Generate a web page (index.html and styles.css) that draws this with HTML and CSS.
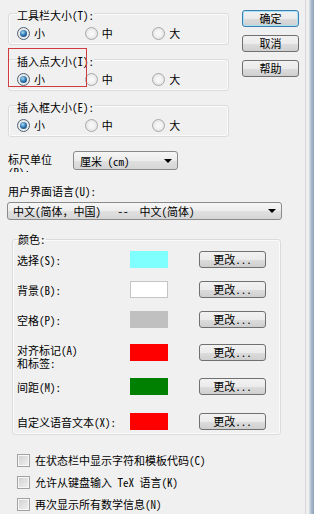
FILE: index.html
```html
<html lang="zh-CN">
<head>
    <meta charset="UTF-8">
    <meta name="viewport" content="width=device-width, initial-scale=1.0">
    <link rel="stylesheet" href="styles.css">
    <title>选项</title>
</head>
<body>
  <div class="dialog">
    <div class="content">
      <div class="top">
        <div class="groups">
          <fieldset class="group">
            <legend>工具栏大小(T):</legend>
            <div class="opts">
              <label class="opt"><span class="radio on"></span>小</label>
              <label class="opt"><span class="radio"></span>中</label>
              <label class="opt"><span class="radio"></span>大</label>
            </div>
          </fieldset>
          <div class="mark-wrap">
            <fieldset class="group">
              <legend>插入点大小(I):</legend>
              <div class="opts">
                <label class="opt"><span class="radio on"></span>小</label>
                <label class="opt"><span class="radio"></span>中</label>
                <label class="opt"><span class="radio"></span>大</label>
              </div>
            </fieldset>
            <span class="mark"></span>
          </div>
          <fieldset class="group">
            <legend>插入框大小(E):</legend>
            <div class="opts">
              <label class="opt"><span class="radio on"></span>小</label>
              <label class="opt"><span class="radio"></span>中</label>
              <label class="opt"><span class="radio"></span>大</label>
            </div>
          </fieldset>
        </div>
        <div class="side">
          <button class="btn default">确定</button>
          <button class="btn">取消</button>
          <button class="btn">帮助</button>
        </div>
      </div>

      <div class="ruler">
        <div class="ruler-label">标尺单位 (R):</div>
        <div class="combo small"><span>厘米 (cm)</span><span class="arrow"></span></div>
      </div>

      <div class="lang-label">用户界面语言(U):</div>
      <div class="combo wide"><span class="pre">中文(简体，中国)   --  中文(简体)</span><span class="arrow"></span></div>

      <fieldset class="colors">
        <legend>颜色:</legend>
        <div class="crow">
          <div class="clabel">选择(S):</div>
          <div class="swatch" style="background:#80ffff"></div>
          <button class="btn change">更改...</button>
        </div>
        <div class="crow">
          <div class="clabel">背景(B):</div>
          <div class="swatch white" style="background:#ffffff"></div>
          <button class="btn change">更改...</button>
        </div>
        <div class="crow">
          <div class="clabel">空格(P):</div>
          <div class="swatch" style="background:#c0c0c0"></div>
          <button class="btn change">更改...</button>
        </div>
        <div class="crow two">
          <div class="clabel">对齐标记(A)<br>和标签:</div>
          <div class="swatch" style="background:#ff0000"></div>
          <button class="btn change">更改...</button>
        </div>
        <div class="crow r5">
          <div class="clabel">间距(M):</div>
          <div class="swatch" style="background:#008000"></div>
          <button class="btn change">更改...</button>
        </div>
        <div class="crow r6">
          <div class="clabel">自定义语音文本(X):</div>
          <div class="swatch" style="background:#ff0000"></div>
          <button class="btn change">更改...</button>
        </div>
      </fieldset>

      <div class="checks">
        <label class="chk"><span class="box"></span>在状态栏中显示字符和模板代码(C)</label>
        <label class="chk"><span class="box"></span>允许从键盘输入 TeX 语言(K)</label>
        <label class="chk"><span class="box"></span>再次显示所有数学信息(N)</label>
      </div>
    </div>
    <div class="edge"></div>
  </div>
</body>
</html>
```

FILE: styles.css
```css
html, body {
    margin: 0;
    height: 514px;
    overflow: hidden;
}
body {
    background: #f0f0f0;
    color: #000;
    font-family: "Noto Sans Mono CJK SC", "Noto Sans CJK SC", sans-serif;
    font-size: 11px;
}
.dialog {
    display: flex;
    height: 514px;
}
.content {
    width: 306px;
    box-sizing: border-box;
    border-right: 1px solid #d6d6d6;
    padding-left: 8px;
}
.edge {
    width: 5px;
    margin-left: 3px;
    background: linear-gradient(to right, #dde4ec, #a9b9ca 50%, #8fa3b8);
}

/* top: three radio groups + buttons */
.top {
    display: flex;
    padding-top: 4px;
}
.groups {
    width: 221px;
}
fieldset {
    margin: 0;
    min-width: 0;
    border: 1px solid #d9dcdf;
    border-radius: 3px;
    box-shadow: inset 0 0 0 1px #fbfbfb;
}
.group {
    padding: 4px 8px;
}
.group legend {
    padding: 4px 0 0;
    line-height: 14px;
}
.mark-wrap {
    position: relative;
    margin-top: 5px;
}
.group + .mark-wrap + .group {
    margin-top: 5px;
}
.mark {
    position: absolute;
    top: -2px;
    left: 0;
    width: 79px;
    height: 39px;
    box-sizing: border-box;
    border: 1px solid #cf3b3e;
}
.opts {
    display: flex;
    height: 14px;
}
.opt {
    display: flex;
    align-items: center;
    gap: 4px;
    width: 71px;
    line-height: 14px;
}
.radio {
    display: flex;
    align-items: center;
    justify-content: center;
    flex: none;
    width: 13px;
    height: 13px;
    box-sizing: border-box;
    border-radius: 50%;
    border: 1px solid #a8a8a8;
    background: radial-gradient(circle, #f6f6f6 30%, #d9d9d9 100%);
}
.radio.on {
    border-color: #4d6176;
}
.radio.on::after {
    content: "";
    width: 7px;
    height: 7px;
    border-radius: 50%;
    background: radial-gradient(circle at 40% 35%, #a6dcf8 0%, #2b73ad 50%, #0d3b69 100%);
}
.side {
    display: flex;
    flex-direction: column;
    gap: 8px;
    width: 57px;
    margin: 6px 0 0 13px;
}
.btn {
    height: 17px;
    padding: 0;
    box-sizing: border-box;
    border: 1px solid #707070;
    border-radius: 3px;
    background: linear-gradient(#f2f2f2, #ebebeb 50%, #dddddd 51%, #cfcfcf);
    font: inherit;
    color: #000;
    line-height: 15px;
}
.btn.default {
    border-color: #3c7fb1;
    box-shadow: inset 0 0 0 1px #a8e2f7;
}

/* ruler and language */
.ruler {
    display: flex;
    align-items: flex-start;
    margin-top: 14px;
}
.ruler-label {
    width: 58px;
    height: 19px;
    margin-top: 2px;
    overflow: hidden;
    line-height: 13px;
}
.combo {
    display: flex;
    align-items: center;
    justify-content: space-between;
    box-sizing: border-box;
    border: 1px solid #8a8a8a;
    border-radius: 3px;
    background: linear-gradient(#f6f6f6, #ececec 50%, #e0e0e0 51%, #d6d6d6);
    padding: 0 5px 0 6px;
}
.combo.small {
    width: 105px;
    height: 19px;
    margin-left: 7px;
}
.combo.wide {
    width: 275px;
    height: 18px;
    margin: 4px 0 0 -1px;
    padding-left: 5px;
}
.pre {
    white-space: pre;
}
.arrow {
    width: 0;
    height: 0;
    border-left: 4px solid transparent;
    border-right: 4px solid transparent;
    border-top: 4px solid #000;
}
.lang-label {
    margin-top: 12px;
    line-height: 14px;
}

/* colours */
.colors {
    width: 269px;
    box-sizing: border-box;
    margin: 12px 0 0 4px;
    padding: 5px 4px 4px;
}
.colors legend {
    padding: 0;
    margin-left: 1px;
    line-height: 14px;
}
.crow {
    display: flex;
    align-items: center;
    height: 17px;
}
.crow + .crow {
    margin-top: 13px;
}
.crow.two {
    align-items: flex-start;
    margin-top: 16px;
}
.crow.r5 {
    margin-top: 17px;
}
.crow.r6 {
    margin-top: 18px;
}
.clabel {
    width: 113px;
    line-height: 12px;
}
.two .clabel {
    line-height: 13px;
}
.swatch {
    width: 38px;
    height: 17px;
}
.swatch.white {
    box-sizing: border-box;
    border: 1px solid #c4c4c4;
}
.btn.change {
    width: 67px;
    margin-left: 31px;
}

/* checkboxes */
.checks {
    margin-top: 14px;
    padding-left: 9px;
}
.chk {
    display: flex;
    align-items: center;
    gap: 5px;
    line-height: 22px;
}
.box {
    width: 13px;
    height: 13px;
    box-sizing: border-box;
    border: 1px solid #a2a2a2;
    background: linear-gradient(135deg, #cfcfcf, #f2f2f2);
    box-shadow: inset 0 0 0 1px #f7f7f7;
}
```
